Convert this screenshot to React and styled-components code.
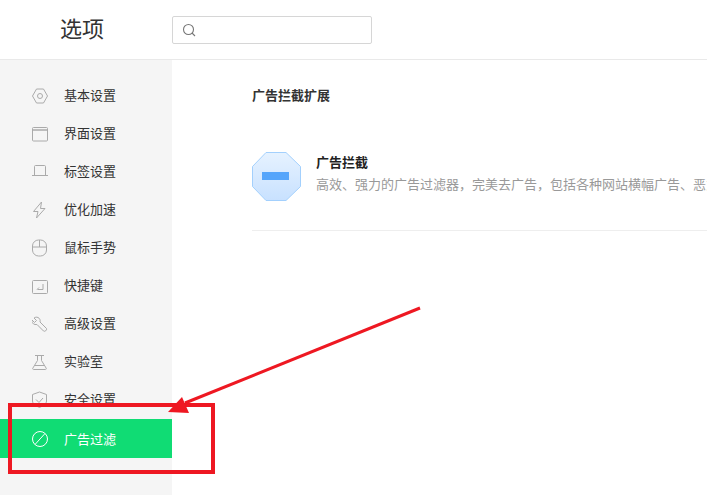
import styled, { createGlobalStyle } from "styled-components";

const GlobalStyle = createGlobalStyle`
  html, body {
    margin: 0;
    padding: 0;
    background: #fff;
    overflow: hidden;
  }
`;

const Page = styled.div`
  position: relative;
  width: 707px;
  height: 495px;
  overflow: hidden;
  font-family: "Liberation Sans", "Noto Sans CJK SC", sans-serif;
  color: #333;
`;

const Header = styled.header`
  display: flex;
  align-items: center;
  height: 59px;
  border-bottom: 1px solid #e9e9e9;
`;

const Title = styled.h1`
  width: 172px;
  margin: 0;
  padding-left: 60px;
  box-sizing: border-box;
  font-size: 22px;
  font-weight: 400;
  line-height: 59px;
  color: #333;
`;

const SearchBox = styled.div`
  display: flex;
  align-items: center;
  box-sizing: border-box;
  width: 200px;
  height: 28px;
  margin-top: 1px;
  padding-left: 9px;
  border: 1px solid #d6d6d6;
  border-radius: 2px;
`;

const Body = styled.div`
  display: flex;
  height: 435px;
`;

const Sidebar = styled.nav`
  width: 172px;
  flex: none;
  padding-top: 17px;
  box-sizing: border-box;
  background: #f5f5f5;
`;

const NavItem = styled.div`
  display: flex;
  align-items: center;
  gap: 16px;
  height: ${(p) => (p.$active ? "39px" : "38px")};
  padding-left: 32px;
  font-size: 13px;
  color: ${(p) => (p.$active ? "#fff" : "#333")};
  background: ${(p) => (p.$active ? "#10dc74" : "transparent")};
  svg {
    flex: none;
  }
`;

const NavLabel = styled.span`
  margin-top: ${(p) => (p.$active ? "0" : "-3px")};
`;

const Content = styled.main`
  flex: 1;
  min-width: 0;
  padding: 27px 0 0 80px;
`;

const SectionTitle = styled.h2`
  margin: 0;
  font-size: 13px;
  font-weight: 700;
  line-height: 18px;
  color: #333;
`;

const ExtensionRow = styled.div`
  display: flex;
  align-items: flex-start;
  gap: 15px;
  height: 78px;
  margin-top: 47px;
  border-bottom: 1px solid #eee;
`;

const ExtensionText = styled.div`
  min-width: 0;
  flex: 1;
  padding-top: 2px;
  overflow: hidden;
  white-space: nowrap;
`;

const ExtensionName = styled.div`
  font-size: 13px;
  font-weight: 700;
  line-height: 18px;
  color: #222;
`;

const ExtensionDesc = styled.div`
  margin-top: 4px;
  font-size: 13px;
  line-height: 18px;
  color: #999;
`;

const Overlay = styled.svg`
  position: absolute;
  inset: 0;
  pointer-events: none;
`;

const Icon = ({ children, color = "#aaa" }) => (
  <svg width="16" height="18" viewBox="0 0 16 18" fill="none" stroke={color} strokeWidth="1">
    {children}
  </svg>
);

const items = [
  {
    label: "基本设置",
    icon: (
      <>
        <path d="M4.500 2h7L15.500 9l-4 7h-7L.5 9z" />
        <circle cx="8" cy="9" r="2.500" />
      </>
    ),
  },
  {
    label: "界面设置",
    icon: (
      <>
        <rect x=".5" y="2.500" width="15" height="13.500" rx="1" />
        <path d="M.5 5h15" strokeWidth="1.500" />
      </>
    ),
  },
  {
    label: "标签设置",
    icon: <path d="M2.500 12.500V3.500c0-.6.4-1 1-1h9c.6 0 1 .4 1 1v9M0 12.500h16" />,
  },
  {
    label: "优化加速",
    icon: <path d="M9.500 1 1.500 10.500h4.500L4.500 17l8.500-9.500H8.500z" />,
  },
  {
    label: "鼠标手势",
    icon: (
      <>
        <rect x=".5" y="1" width="14" height="16" rx="6" />
        <path d="M.5 8h14M7.500 1v7" />
      </>
    ),
  },
  {
    label: "快捷键",
    icon: (
      <>
        <rect x=".5" y="3.500" width="15" height="13" rx="1" />
        <path d="M11 7v5.500H5.500M7 10.500 5 12.500" />
      </>
    ),
  },
  {
    label: "高级设置",
    icon: (
      <path d="M6 2.500c-1.500-.7-3-.2-4 .5l2.500 2.500-2 2L0 5c-.5 2 .5 4 3 4.500.8.100 1.500 0 2 0l6.500 6.500c1 1 3.800-.7 3-2.500L8 7c.5-2-.2-3.600-2-4.500z" />
    ),
  },
  {
    label: "实验室",
    icon: <path d="M3 2.500h9M5.500 2.500v5L.8 15.200c-.3.800 0 1.300.8 1.300h11.800c.8 0 1.100-.5.8-1.300L9.500 7.500v-5M3 12.500h9" />,
  },
  {
    label: "安全设置",
    icon: (
      <>
        <path d="M7.500 1 .5 3.500V10c0 3 3.500 5 7 6.500 3.500-1.500 7-3.500 7-6.500V3.500z" />
        <path d="m4 8.500 3 3 4-4.500" />
      </>
    ),
  },
];

export default function App() {
  return (
    <Page>
      <GlobalStyle />
      <Header>
        <Title>选项</Title>
        <SearchBox>
          <svg width="14" height="14" viewBox="0 0 14 14" fill="none" stroke="#777" strokeWidth="1.100">
            <circle cx="6.500" cy="6.500" r="5" />
            <path d="m10 10 3 3" />
          </svg>
        </SearchBox>
      </Header>
      <Body>
        <Sidebar>
          {items.map((item) => (
            <NavItem key={item.label}>
              <Icon>{item.icon}</Icon>
              <NavLabel>{item.label}</NavLabel>
            </NavItem>
          ))}
          <NavItem $active>
            <Icon color="#fff">
              <circle cx="8" cy="9" r="7.500" />
              <path d="M3 14.500 13 3.500" />
            </Icon>
            <NavLabel $active>广告过滤</NavLabel>
          </NavItem>
        </Sidebar>
        <Content>
          <SectionTitle>广告拦截扩展</SectionTitle>
          <ExtensionRow>
            <svg width="49" height="49" viewBox="0 0 49 49" style={{ flex: "none" }}>
              <defs>
                <linearGradient id="adblock" x1="0" y1="0" x2="0" y2="1">
                  <stop offset="0" stopColor="#e6f2ff" />
                  <stop offset="1" stopColor="#c8e1ff" />
                </linearGradient>
              </defs>
              <path d="M14 .5h20l14.500 14v20l-14.500 14H14L.5 34.500v-20z" fill="url(#adblock)" stroke="#a3d0fd" />
              <rect x="10" y="20" width="27" height="8" fill="#55a5fb" />
            </svg>
            <ExtensionText>
              <ExtensionName>广告拦截</ExtensionName>
              <ExtensionDesc>高效、强力的广告过滤器，完美去广告，包括各种网站横幅广告、恶意弹窗广告</ExtensionDesc>
            </ExtensionText>
          </ExtensionRow>
        </Content>
      </Body>
      <Overlay width="707" height="495" viewBox="0 0 707 495">
        <rect x="10" y="405" width="203" height="67" fill="none" stroke="#ee1822" strokeWidth="4" />
        <path d="M420 308 185 403" stroke="#ee1822" strokeWidth="3" />
        <path d="M168 412 182 397 189 413z" fill="#ee1822" />
      </Overlay>
    </Page>
  );
}
